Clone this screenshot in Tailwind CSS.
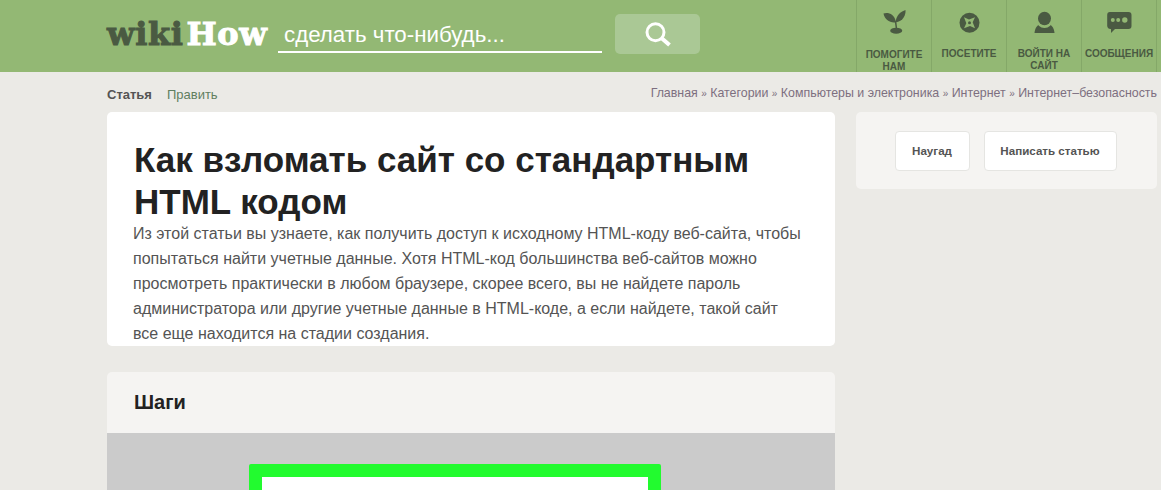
<!DOCTYPE html>
<html lang="ru">

<head>
    <meta charset="UTF-8" />
    <title>wikiHow</title>
    <script src="https://cdn.jsdelivr.net/npm/@tailwindcss/browser@4"></script>
</head>

<body class="bg-[#ebeae6] h-[490px] overflow-hidden font-['Liberation_Sans',Arial,sans-serif]">

    <!-- header -->
    <header class="bg-[#93b874] h-[72px] flex pl-[107px]">
        <div class="w-[171px] pt-[14px] [font-family:'DejaVu_Serif',serif] font-bold text-[32px] leading-[40px] tracking-[0.6px] [-webkit-text-stroke:1px] text-[#4a5a42] whitespace-nowrap">wiki<span class="text-white ml-[3px]">How</span></div>
        <div class="w-[324px] h-[53px] border-b-2 border-white pl-[6px] pt-[22px] text-[22.3px] leading-[26px] text-white">сделать что-нибудь...</div>
        <button class="ml-[13px] mt-[14px] w-[85px] h-[40px] bg-[#aac895] rounded-[5px] flex items-center justify-center">
            <svg width="28" height="28" viewBox="0 0 28 28" fill="none" stroke="white">
                <circle cx="11.5" cy="12.3" r="8.5" stroke-width="3" />
                <path d="M18 18.5L25.5 25" stroke-width="4" />
            </svg>
        </button>

        <nav class="ml-[156px] flex border-l border-[#84a868] text-[10px] leading-[12px] font-bold text-[#4a5a42] text-center uppercase">
            <a class="w-[75px] border-r border-[#84a868] pt-[10px] flex flex-col items-center">
                <svg class="shrink-0" width="25" height="25" viewBox="0 0 25 25" fill="#4a5a42">
                    <path d="M1.5 3.5c4-1.5 11 0 12.5 8.5-.1.5-1 .7-2 .5C7 12.5 2.5 9 1.5 3.5z" />
                    <path d="M23.5 0c.5 5-2.5 11-9 12.2-.5-.2-.7-.6-.7-1.2C14.5 5 19 1.5 23.5 0z" />
                    <path d="M13.5 11l1 8" stroke="#4a5a42" stroke-width="1.5" />
                    <ellipse cx="14.2" cy="20.7" rx="6" ry="3" />
                </svg>
                <span class="mt-[14px]">Помогите нам</span>
            </a>
            <a class="w-[75px] border-r border-[#84a868] pt-[10px] flex flex-col items-center">
                <svg class="shrink-0" width="25" height="24" viewBox="0 0 25 24">
                    <circle cx="12.5" cy="12.7" r="10" fill="#4a5a42" />
                    <path d="M7 7.2L12 9.5 18 7.2 15.7 12.2 18 18.2 13 15.9 7 18.2 9.3 13.2z" fill="#93b874" />
                    <circle cx="12.5" cy="12.7" r="1.5" fill="#4a5a42" />
                </svg>
                <span class="mt-[14px]">Посетите</span>
            </a>
            <a class="w-[75px] border-r border-[#84a868] pt-[10px] flex flex-col items-center">
                <svg class="shrink-0" width="25" height="24" viewBox="0 0 25 24" fill="#4a5a42">
                    <path d="M2.5 23C3 19 4 16 8 14h9c4 2 5 5 5.5 9z" />
                    <ellipse cx="12.5" cy="10.5" rx="8" ry="7.5" fill="#93b874" />
                    <ellipse cx="12.5" cy="8.5" rx="6.5" ry="6.7" />
                </svg>
                <span class="mt-[14px]">Войти на сайт</span>
            </a>
            <a class="w-[75px] border-r border-[#84a868] pt-[10px] flex flex-col items-center">
                <svg class="shrink-0" width="26" height="24" viewBox="0 0 26 24" fill="#4a5a42">
                    <path d="M4.5 2h18a3 3 0 0 1 3 3v11a3 3 0 0 1-3 3H9l-4 4v-4a3.5 3.5 0 0 1-3.8-3V5a3 3 0 0 1 3.3-3z" />
                    <circle cx="6.8" cy="10" r="2" fill="#93b874" />
                    <circle cx="12.2" cy="10" r="2" fill="#93b874" />
                    <circle cx="18.8" cy="10" r="2.7" fill="#93b874" />
                </svg>
                <span class="mt-[14px]">Сообщения</span>
            </a>
        </nav>
    </header>

    <div class="flex pl-[107px] gap-[21px]">
        <!-- main column -->
        <main class="w-[728px]">
            <div class="h-[40px] flex items-center justify-between -mr-[323px] pr-[1px]">
                <div class="flex gap-[15px] pt-[5px] text-[13px]">
                    <span class="font-bold text-[#545454]">Статья</span>
                    <span class="text-[#5f7f5f]">Править</span>
                </div>
                <div class="text-[12.4px] pt-[3px] text-[#7d6f80]">Главная <span class="text-[10px]">»</span> Категории <span class="text-[10px]">»</span> Компьютеры и электроника <span class="text-[10px]">»</span> Интернет <span class="text-[10px]">»</span> Интернет–безопасность</div>
            </div>

            <section class="bg-white rounded-[5px] h-[234px] pl-[27px] pr-[30px] pt-[27px]">
                <h1 class="font-bold text-[35px] leading-[42px] text-[#222]">Как взломать сайт со стандартным HTML кодом</h1>
                <p class="-mt-[2px] -ml-[1px] text-[16px] leading-[25px] text-[#545454]">Из этой статьи вы узнаете, как получить доступ к исходному HTML-коду веб-сайта, чтобы попытаться найти учетные данные. Хотя HTML-код большинства веб-сайтов можно просмотреть практически в любом браузере, скорее всего, вы не найдете пароль администратора или другие учетные данные в HTML-коде, а если найдете, такой сайт все еще находится на стадии создания.</p>
            </section>

            <section class="mt-[26px] rounded-t-[5px] overflow-hidden">
                <h2 class="bg-[#f5f4f2] h-[61px] pl-[27px] pt-[17px] font-bold text-[20px] leading-[26px] text-[#222]">Шаги</h2>
                <div class="bg-[#cbcbcb] h-[200px] pt-[31px] pr-[32px] flex justify-center">
                    <div class="w-[412px] h-[100px] bg-[#22fb2f] rounded-[2px] pt-[13px] px-[13px]">
                        <div class="h-full bg-white"></div>
                    </div>
                </div>
            </section>
        </main>

        <!-- sidebar -->
        <aside class="w-[301px] pt-[40px]">
            <div class="bg-[#f5f4f2] rounded-[5px] h-[77px] pr-[2px] flex justify-center items-center gap-[14px] text-[11.6px] font-bold text-[#545454]">
                <button class="w-[75px] h-[40px] bg-white border border-[#e5e5e2] rounded-[4px] font-bold">Наугад</button>
                <button class="w-[133px] h-[40px] bg-white border border-[#e5e5e2] rounded-[4px] font-bold">Написать статью</button>
            </div>
        </aside>
    </div>

</body>

</html>
